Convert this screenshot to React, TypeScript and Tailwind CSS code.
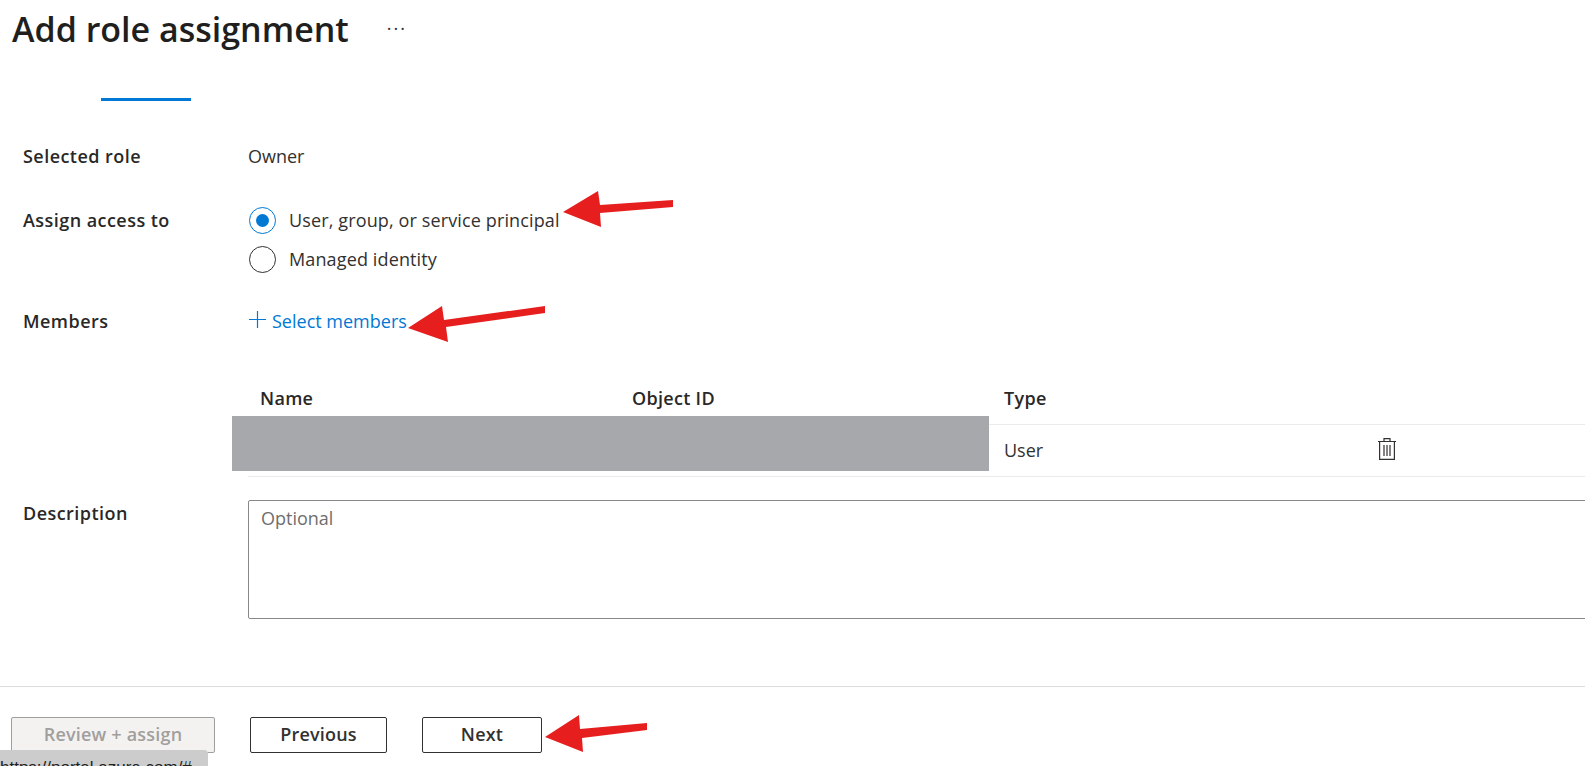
const font = "font-['Open_Sans',sans-serif]";

function FormRow({ label, className, children }: { label: string; className: string; children?: React.ReactNode }) {
    return (
        <div className={`flex ${className}`}>
            <div className="w-[248px] shrink-0 pl-[23px] font-semibold tracking-[0.45px] text-[#292827]">{label}</div>
            {children}
        </div>
    );
}

function Radio({ checked, label }: { checked?: boolean; label: string }) {
    return (
        <div className="flex h-[39px] items-center">
            <span className={`ml-[1px] flex h-[27px] w-[27px] items-center justify-center rounded-full border-[1.5px] ${checked ? "border-[#0078d4]" : "border-[#323130]"}`}>
                {checked && <span className="h-[13px] w-[13px] rounded-full bg-[#0078d4]" />}
            </span>
            <span className="ml-[13px] tracking-[0.13px] text-[#323130]">{label}</span>
        </div>
    );
}

function PlusIcon() {
    return (
        <svg width="17" height="17" viewBox="0 0 17 17" fill="none" stroke="#0078d4" strokeWidth="1.2" className="mr-[6px] -mt-[3px] ml-[1px]">
            <path d="M8.5 0v17M0 8.5h17" />
        </svg>
    );
}

function TrashIcon() {
    return (
        <svg width="18" height="22" viewBox="0 0 18 22" fill="none" stroke="#323130" strokeWidth="1.2" className="-mt-[3px]">
            <path d="M0 3.5h18M6 3.5V.7h6v2.8M1.6 3.5v17.8h14.8V3.5M6 7v11M9 7v11M12 7v11" />
        </svg>
    );
}

function Button({ children, className }: { children: React.ReactNode; className: string }) {
    return (
        <button type="button" className={`flex h-[36px] items-center justify-center rounded-[2px] border pb-[2px] font-semibold ${className}`}>
            {children}
        </button>
    );
}

export default function App() {
    return (
        <div className={`relative h-[766px] w-[1585px] overflow-hidden bg-white text-[18px] ${font}`}>
            {/* header */}
            <div className="flex h-[60px] items-center pl-[12px] pb-[2px]">
                <h1 className="text-[34px] font-semibold text-[#201f1e]">Add role assignment</h1>
                <span className="ml-[38px] mb-[2px] text-[18px] leading-none tracking-[2px] text-[#323130]">···</span>
            </div>

            {/* tab underline */}
            <div className="mt-[38px] ml-[101px] h-[3px] w-[90px] bg-[#0078d4]" />

            <FormRow label="Selected role" className="mt-[43px] h-[24px] items-center">
                <span className="text-[#323130]">Owner</span>
            </FormRow>

            <FormRow label="Assign access to" className="mt-[39px] items-start">
                <div className="-mt-[6px]">
                    <Radio checked label="User, group, or service principal" />
                    <Radio label="Managed identity" />
                </div>
            </FormRow>

            <FormRow label="Members" className="mt-[30px] h-[24px] items-center">
                <span className="flex items-center text-[#0078d4]">
                    <PlusIcon />
                    Select members
                </span>
            </FormRow>

            {/* members table */}
            <div className="mt-[52px] ml-[248px]">
                <div className="flex h-[40px] items-start border-b border-[#edebe9] font-semibold tracking-[0.3px] text-[#292827]">
                    <div className="w-[384px] pl-[12px]">Name</div>
                    <div className="w-[372px]">Object ID</div>
                    <div>Type</div>
                </div>
                <div className="flex h-[52px] items-center border-b border-[#edebe9] text-[#323130]">
                    <div className="w-[756px]" />
                    <div className="w-[374px]">User</div>
                    <TrashIcon />
                </div>
            </div>
            {/* redacted cells */}
            <div className="absolute left-[232px] top-[416px] h-[55px] w-[757px] bg-[#a7a8ab]" />

            <FormRow label="Description" className="mt-[23px] items-start">
                <div className="h-[119px] w-[1400px] shrink-0 rounded-[2px] border border-[#8a8886] px-[12px] py-[4px] text-[#6e6e6e]">
                    Optional
                </div>
            </FormRow>

            {/* footer */}
            <div className="mt-[67px] flex border-t border-[#dcdcdc] pt-[30px] pl-[11px] tracking-[0.2px]">
                <Button className="w-[204px] border-[#a19f9d] bg-[#f3f2f1] text-[#a19f9d]">Review + assign</Button>
                <Button className="ml-[35px] w-[137px] border-[#323130] text-[#323130]">Previous</Button>
                <Button className="ml-[35px] w-[120px] border-[#323130] text-[#323130]">Next</Button>
            </div>

            {/* browser status bubble */}
            <div className="absolute bottom-0 left-0 h-[16px] w-[208px] overflow-hidden rounded-tr-[4px] bg-[#cccccc] pt-[8px] font-['Liberation_Sans',sans-serif] text-[17px] leading-[20px] whitespace-nowrap text-[#222]">
                https://portal.azure.com/#
            </div>

            {/* annotation arrows */}
            <svg className="absolute inset-0" width="1585" height="766" fill="#e61e1e">
                <polygon points="563,212 598,191 600,205 673,200 673,207 600,213 601,227" />
                <polygon points="408,328 442,306 444,320 545,306 545,313 446,327 448,342" />
                <polygon points="545,737 579,715 580,729 647,723 647,730 582,738 583,752" />
            </svg>
        </div>
    );
}
